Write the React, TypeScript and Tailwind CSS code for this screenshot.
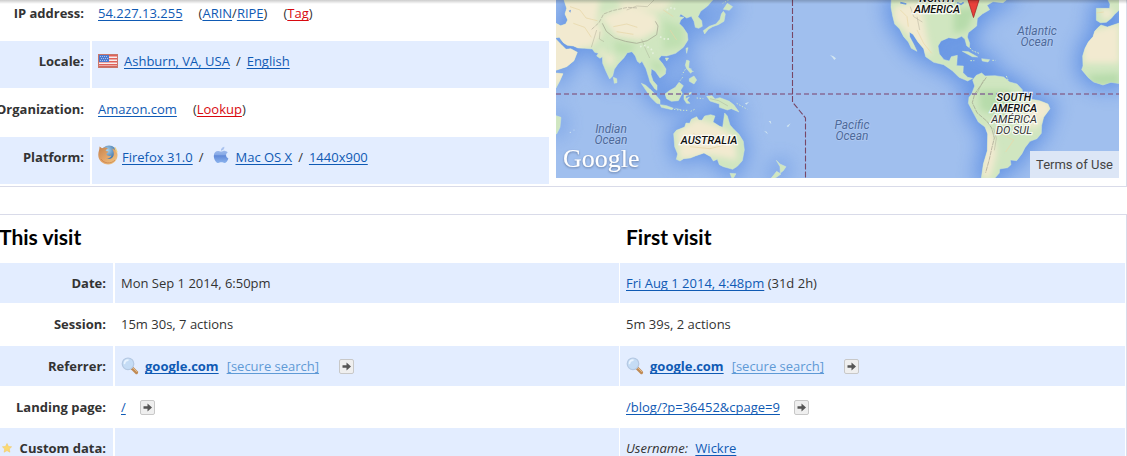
import type { ReactNode } from 'react';

const link = 'underline underline-offset-2 [text-decoration-skip-ink:none] text-[#0f5ab4]';

function A({ children, className = '' }: { children: ReactNode; className?: string }) {
  return (
    <a href="#" className={`${link} ${className}`}>
      {children}
    </a>
  );
}

function Red({ children }: { children: ReactNode }) {
  return (
    <a href="#" className="text-[#d8090f] underline underline-offset-2 [text-decoration-skip-ink:none]">
      {children}
    </a>
  );
}

function Slash() {
  return <span className="mx-[6px]">/</span>;
}

function Flag() {
  return (
    <svg viewBox="0 0 20 14" className="mr-[6px] h-[14px] w-5 shrink-0" aria-hidden="true">
      <rect width="20" height="14" fill="#c9766a" />
      <rect x="1" y="1" width="18" height="12" fill="#f7eeee" />
      {[1, 4, 7, 10].map((y) => (
        <rect key={y} x="1" y={y} width="18" height="1.5" fill="#e0625a" />
      ))}
      <rect x="1" y="12" width="18" height="1.2" fill="#d06a60" />
      <rect x="1" y="1" width="10" height="7" fill="#4b78cf" />
      <path d="M2 2.5h8M3 4.5h8M2 6.5h8" stroke="#c3d5f5" strokeWidth=".8" strokeDasharray="1 1" />
    </svg>
  );
}

function Firefox() {
  return (
    <svg viewBox="0 0 20 20" className="h-5 w-5 shrink-0" aria-hidden="true">
      <defs>
        <radialGradient id="globe" cx=".4" cy=".3">
          <stop offset="0" stopColor="#a9d3ee" />
          <stop offset="1" stopColor="#4a7db0" />
        </radialGradient>
        <linearGradient id="fox" x1="0" y1="0" x2="1" y2="1">
          <stop offset="0" stopColor="#c4824c" />
          <stop offset=".5" stopColor="#e3a468" />
          <stop offset="1" stopColor="#f0cb88" />
        </linearGradient>
      </defs>
      <circle cx="11" cy="8.5" r="8" fill="url(#globe)" />
      <path
        d="M1.5 1.5 4 3.3C6 2.2 8.500 2.300 10 3.500 8.300 4 7.600 5 7.800 6l2.600.6c-.1 1.200-1.600 1.500-2 2.400.6 1.900 3 2.500 5 1.500-.5 2-3 3.400-5 2.800 2.800 1.700 6.600.2 7.300-3.300.4-2.400-.4-4.500-1.700-6.500 3 .8 4.500 2.300 5.400 5.200.9 5.700-3.400 10.600-9 10.700C4.600 19.500.2 15.400.3 9.800.3 6.500 1.700 4.500 1.500 1.500Z"
        fill="url(#fox)"
      />
      <path d="M3 14c2.500 4.500 10 5.500 14 1" stroke="#b9683a" strokeWidth="1" fill="none" opacity=".5" />
      <path d="m17 2.500 2 5" stroke="#f2cf80" strokeWidth="1.500" />
    </svg>
  );
}

function Apple() {
  return (
    <svg viewBox="0 0 16 18" className="h-[18px] w-4 shrink-0" aria-hidden="true">
      <defs>
        <linearGradient id="apple" x1="0" y1="0" x2="0" y2="1">
          <stop offset="0" stopColor="#b4caf2" />
          <stop offset=".5" stopColor="#85a8e6" />
          <stop offset=".55" stopColor="#6189d8" />
          <stop offset="1" stopColor="#8cb4ee" />
        </linearGradient>
      </defs>
      <path
        d="M8 5.600C9 5.600 10.500 4.600 12.300 4.900c1 .1 1.900.6 2.500 1.400-2.500 1.700-2.200 4.900.6 6.100C14.600 14.700 13 17 11.500 17c-1.200 0-1.700-.7-3.100-.7S6.400 17 5.200 17C3.200 17 .8 13.300.8 9.900.8 6.700 2.800 5 4.800 5c1.400 0 2.300.6 3.200.6ZM7.900 4.700C7.800 2.700 9.500.9 11.400.8c.3 2-1.500 3.900-3.500 3.900Z"
        fill="url(#apple)"
      />
    </svg>
  );
}

function Magnifier() {
  return (
    <svg viewBox="0 0 18 18" className="h-[18px] w-[18px] shrink-0" aria-hidden="true">
      <path d="m11 11 4.500 4.500" stroke="#c08a54" strokeWidth="3.200" strokeLinecap="round" />
      <path d="m11.500 10.600 4.200 4" stroke="#e5bd8b" strokeWidth="1" strokeLinecap="round" />
      <circle cx="7" cy="6.800" r="5.800" fill="#c5dcf5" stroke="#b4c8e2" strokeWidth="1.200" />
      <path d="M3.500 6.500a3.600 3.600 0 0 1 3.500-3.400" stroke="#eaf4ff" strokeWidth="1.600" fill="none" strokeLinecap="round" />
    </svg>
  );
}

function Go() {
  return (
    <a href="#" aria-label="Open page" className="block h-[15px] w-[15px] shrink-0">
      <svg viewBox="0 0 15 15" className="block h-[15px] w-[15px]" aria-hidden="true">
        <rect x=".5" y=".5" width="14" height="14" rx="1.500" fill="#efefef" stroke="#c8c8c8" />
        <path d="M3.500 6.300h4V3.500L12 7.500 7.500 11.500V8.700h-4Z" fill="#555" />
      </svg>
    </a>
  );
}

function Star() {
  return (
    <svg viewBox="0 0 10 10" className="h-[10px] w-[10px] shrink-0" aria-hidden="true">
      <path d="m5 .5 1.400 2.900 3.200.4-2.300 2.200.6 3.200L5 7.600 2.100 9.200l.6-3.200L.4 3.800l3.200-.4Z" fill="#fbd971" stroke="#f2c75c" strokeWidth=".5" />
    </svg>
  );
}

const ASIA = `M42 0 50 25 45 42 53 60 47 72 32 77 18 70V113L28 112 40 128 52 136 70 138 84 144 104 145 127 147 134 157 145 160 140 168 150 175 157 170 158 190 168 214 179 237 188 228 193 208 204 192 222 173 232 158 246 155 256 168 262 184 270 190 276 184 288 206 296 232 300 246 314 266 321 271 321 256 309 242 303 224 304 206 316 214 330 234 346 222 348 207 337 190 326 177 334 167 350 168 377 160 400 142 414 120 412 101 399 82 388 71 392 60 402 52 388 50 392 42 410 54 424 49 432 64 436 82 446 85 457 79 455 62 444 50 452 34 473 18 488 0Z
M532 10 548 20 538 31 520 28ZM520 34 526 42 522 64 505 74 488 80 475 88 464 102 460 92 478 79 498 72 510 58 514 42Z
M18 118 34 134 48 148 62 146 82 157 72 182 50 200 18 211ZM18 219 39 221 29 244 18 264ZM18 347 33 352 30 382 20 402 18 402Z
M190 232 200 236 201 248 193 250ZM408 145 414 143 410 160ZM346 174 356 174 350 183ZM410 180 418 183 416 202 427 214 422 220 410 206 406 196ZM418 236 432 228 440 240 432 252 418 244Z
M274 250 287 256 309 276 330 300 330 312 320 310 302 292ZM330 314 350 317 370 325 366 329 334 322ZM376 325 394 330M345 282 358 272 376 262 387 247 400 257 392 271 397 280 385 302 364 304 350 296Z
M402 284 424 277 422 282 407 288 407 296 418 291 411 300 420 310 410 310 402 298ZM470 289 486 287 495 297 510 293 538 304 552 315 567 336 544 326 532 330 508 322 508 312 480 303Z
M371 401 379 391 404 381 408 369 419 370 424 358 440 350 446 360 456 361 464 348 482 344 495 348 489 366 508 378 518 382 524 339 532 348 540 375 550 386 567 403 580 424 583 450 577 482 562 499 548 508 520 500 508 494 502 478 490 483 482 470 462 459 436 468 421 474 401 476 390 483 379 478 383 462 374 440ZM540 520 558 521 551 533 545 533Z
M679 481 690 492 708 500 700 512 691 519 690 500ZM680 514 693 522 676 534 664 534Z`;

const AMERICAS = `M-107 0-108 22-103 48-97 72-82 87-70 110-56 126-47 145-30 154-40 133-52 110-53 96-42 103-27 126-10 146-4 170 20 187 50 194 76 212 96 232 122 243 137 235 122 232 108 218 109 198 89 197 91 166 73 170 67 183 51 179 37 162 33 138 42 123 65 113 88 116 104 109 114 118 119 137 127 143 128 130 121 111 124 98 149 78 151 55 166 42 188 29 180 16 198 5 228 8 238 0Z
M106 154 124 155 152 171 136 170ZM164 176 188 179 183 186 166 183Z
M137 240 148 226 164 219 174 228 204 227 230 231 248 246 270 252 286 269 286 288 309 297 338 302 363 312 369 326 350 352 344 376 343 400 330 416 309 424 294 443 285 461 269 482 250 480 252 494 242 503 218 507 217 519 204 534 163 534 169 492 181 452 182 402 174 381 154 366 143 346 124 310 126 292 134 282 143 258Z
M508 25 548 25 549 12 543 0 577 0V30L563 43 553 55 538 67 520 68 508 61ZM577 69 541 81 522 75 514 82 503 94 498 110 484 126 474 145 467 168 468 198 464 209 484 233 500 246 528 255 552 247 577 251Z`;

interface LabelProps {
  x: number;
  y: number;
  lines: string[];
  ocean?: boolean;
  light?: boolean;
}

function Label({ x, y, lines, ocean = false, light = false }: LabelProps) {
  return (
    <text
      textAnchor="middle"
      fontFamily="Roboto, sans-serif"
      fontStyle="italic"
      fontSize={ocean ? 12 : 11}
      fontWeight={ocean || light ? 400 : 500}
      fill={ocean ? '#4d6a9b' : light ? '#333' : '#111'}
      stroke={ocean ? '#b4ccf2' : '#fff'}
      strokeWidth={ocean ? 1.5 : 2.5}
      strokeOpacity=".8"
      paintOrder="stroke"
    >
      {lines.map((l, i) => (
        <tspan key={l} x={x} y={y + i * 11}>
          {l}
        </tspan>
      ))}
    </text>
  );
}

function WorldMap() {
  return (
    <div className="relative h-[178px] w-[563px] shrink-0 overflow-hidden bg-[#a0bfee]">
      <svg viewBox="0 0 563 178" preserveAspectRatio="xMidYMin slice" className="block h-full w-full" role="img" aria-label="World map">
        <defs>
          <filter id="soft" x="-20%" y="-30%" width="140%" height="160%" colorInterpolationFilters="sRGB">
            <feGaussianBlur stdDeviation="30" />
          </filter>
          <filter id="patch" x="-20%" y="-20%" width="140%" height="140%">
            <feGaussianBlur stdDeviation="9" />
          </filter>
          <clipPath id="asia">
            <path d={ASIA} />
          </clipPath>
          <clipPath id="americas">
            <path d={AMERICAS} />
          </clipPath>
          <filter id="glow">
            <feDropShadow dx="0" dy="1" stdDeviation="1" floodColor="#44587c" floodOpacity=".7" />
          </filter>
        </defs>
        <rect width="563" height="178" fill="#a0bfee" />
        <g transform="translate(-6 0) scale(.33333)">
          <path d={ASIA} fill="#5f90e3" stroke="#5f90e3" strokeWidth="22" filter="url(#soft)" opacity=".85" />
        </g>
        <g transform="translate(371 0) scale(.33333)">
          <path d={AMERICAS} fill="#5f90e3" stroke="#5f90e3" strokeWidth="36" filter="url(#soft)" opacity=".9" />
        </g>
        <g transform="translate(-6 0) scale(.33333)">
          <path d={ASIA} fill="#d0e6c0" stroke="#d3e8d2" strokeWidth="1.500" />
          <g clipPath="url(#asia)">
            <g filter="url(#patch)" fill="#f2ead0">
              <path d="M0 0H150L140 60 160 100 120 145 60 140 0 110ZM150 50 230 20 320 45 325 90 270 120 200 110ZM0 115H90V210L0 270ZM380 395 440 355 500 375 555 410 560 480 480 465 390 480Z" />
              <path d="M200 0H370L340 35 220 30ZM160 165 190 160 195 195 170 195ZM150 145 165 150 160 170 145 165Z" opacity=".8" />
            </g>
            <g filter="url(#patch)" fill="#b4daa6">
              <path d="M340 60 400 80 400 140 340 150ZM190 120 260 135 240 160 200 160ZM300 180 340 190 340 220 310 210Z" opacity=".6" />
            </g>
            <g stroke="#8b8778" fill="none" strokeWidth="2" opacity=".6">
              <path d="m157 70 12 24 25 20 32 10 34 6 32-8 28-18 4-26-8-14" strokeWidth="2.500" />
              <path d="m125 88 22-20 14-26 26-10 46-10 30 2" strokeDasharray="12 3" />
              <path d="m140 90-8 26-8 26M150 95l-2 22 14 8M230 30l30-12 32 2 20-20" strokeWidth="1.500" />
              <path d="m275 118 12 30 12 26M480 296l26 6 28 16" strokeWidth="1.300" />
            </g>
            <g stroke="#e6d6a6" fill="none" strokeWidth="3" opacity=".7">
              <path d="m60 20 30 10 18 24 34 8M70 70l34 12 20 30M190 80l40-8 32 10M200 95l50 8M340 30l30 20M360 90l20 30M430 400l30 20 38-8M420 440l60 6 40-10" />
            </g>
            <path d="m270 140 16-4 18 12 8 20M330 110l16 8 18-2M350 30l16-8 14 8" stroke="#e4f0dc" strokeWidth="5" fill="none" strokeDasharray="5 7" />
          </g>
          <path d="m56 32 7-3-2 9Z" fill="#6f9be0" />
          <g fill="none" stroke="#cfe9c8" strokeWidth="3" strokeDasharray="4 5">
            <path d="m372 328 24 3 18 0M422 334l12-6M440 294l20 2M406 208l-10 16M422 205l10 14M398 232l-8 10M560 310l14 8 18 10" />
            <path d="m536 0-18 10M470 8l-8 12M300 268l10 16" />
          </g>
          <g fill="#d3e6f0">
            <circle cx="61" cy="397" r="2" />
            <circle cx="72" cy="390" r="1.500" />
            <path d="m585 310 12-4-8 8ZM656 363l8 10-2-10ZM642 393l12 10-4-8ZM710 378l12-8-8 12ZM598 322l18 8Z" />
            <path d="m840 165 10 4 8 6-5 5-6-8Z" />
          </g>
        </g>
        <g transform="translate(371 0) scale(.33333)">
          <path d={AMERICAS} fill="#d0e6c0" stroke="#d3e8d2" strokeWidth="1.500" />
          <g clipPath="url(#americas)">
            <g filter="url(#patch)" fill="#f2ead0">
              <path d="M-100 20-30 5-10 50 0 110 15 170-20 150-60 100-100 60ZM465 100 577 70V190H470ZM310 300H370V340L320 390 290 360ZM170 380 200 400 210 460 190 534H165ZM520 20 560 30 555 55 525 60Z" />
            </g>
            <g filter="url(#patch)" fill="#a9d6a0">
              <path d="M155 270 250 270 270 320 220 350 160 330ZM80 30 150 20 120 90 80 100ZM480 225 577 220V255H500Z" opacity=".65" />
            </g>
            <g fill="none" stroke="#8b8778" strokeWidth="2.500" opacity=".6">
              <path d="m178 232-15 22-20 28-7 26 14 30 30 26 14 20 8 30-7 28-8 36-11 40" strokeDasharray="14 2" />
              <path d="m170 240-20 40M200 385l8 30-6 36M-50 20l10 30 26 16M-30 50l8 40" strokeWidth="1.500" />
            </g>
            <path d="m-80 30 20 20 4 30M-30 90l20 40 24 30M220 400l40 20-24 36M300 330l30 10M500 40l30-4M230 270l10 30" stroke="#ead9a8" strokeWidth="3" fill="none" opacity=".7" />
            <path d="m90 8 12 5 8-6M-80 8l18 4" stroke="#709ddd" strokeWidth="5" fill="none" />
          </g>
          <path d="m129 144 7 8 20 8M196 181h10M130 182h12M238 228l5 12" stroke="#cfe9c8" strokeWidth="3" strokeDasharray="5 4" fill="none" />
        </g>
        <g fill="none" stroke="#876b96" strokeWidth="1.300">
          <path d="M0 94H563" strokeDasharray="5 3" />
          <path d="M236.500 0V94V102L249.500 118V178" stroke="#784766" strokeWidth="1.100" strokeDasharray="6 2" />
        </g>
        <Label x={55} y={133} lines={['Indian', 'Ocean']} ocean />
        <Label x={296} y={129} lines={['Pacific', 'Ocean']} ocean />
        <Label x={481} y={35} lines={['Atlantic', 'Ocean']} ocean />
        <Label x={153} y={144} lines={['AUSTRALIA']} />
        <Label x={381} y={2} lines={['NORTH', 'AMERICA']} />
        <Label x={458} y={101} lines={['SOUTH', 'AMERICA']} />
        <Label x={458} y={123} lines={['AMÉRICA', 'DO SUL']} light />
        <path d="M412 0 417.500 17.500 423 0Z" fill="#e9403a" stroke="#a52a2a" strokeWidth=".8" />
        <text x="7" y="167" fontFamily="'Liberation Serif', serif" fontSize="26" fill="#fff" filter="url(#glow)">
          Google
        </text>
      </svg>
      <a
        href="#"
        className="absolute right-0 bottom-0 bg-[#dce6f6] px-[6px] pt-1 pb-[3px] font-[Roboto,sans-serif] text-[13px] leading-5 text-[#444]"
      >
        Terms of Use
      </a>
    </div>
  );
}

function InfoRow({ label, children, shaded = false, first = false }: { label: string; children: ReactNode; shaded?: boolean; first?: boolean }) {
  const bg = shaded ? 'bg-[#e3edff]' : '';
  const pad = first ? 'pt-[3px]' : 'pt-[10px]';
  return (
    <tr>
      <th scope="row" className={`w-[102px] border-b border-white pr-[6px] pb-[17px] text-right align-top font-bold whitespace-nowrap ${pad} ${bg}`}>
        {label}
      </th>
      <td className={`border-b border-l-2 border-white pb-[17px] pl-[6px] align-top ${pad} ${bg}`}>
        <div className="flex h-5 items-center whitespace-nowrap">{children}</div>
      </td>
    </tr>
  );
}

interface VisitRowProps {
  label: string;
  now?: ReactNode;
  then: ReactNode;
  shaded?: boolean;
  star?: boolean;
  tall?: boolean;
}

function VisitRow({ label, now, then, shaded = false, star = false, tall = false }: VisitRowProps) {
  const cell = `border-b border-white pt-[10px] align-top ${tall ? 'pb-[11px]' : 'pb-[10px]'} ${shaded ? 'bg-[#e3edff]' : ''}`;
  return (
    <tr>
      <th scope="row" className={`${cell} pr-[7px] font-bold whitespace-nowrap`}>
        <span className="flex h-5 items-center justify-end gap-2">
          {star && <Star />}
          {label}
        </span>
      </th>
      <td className={`${cell} border-l-2 pl-[6px]`}>
        <div className="flex h-5 items-center whitespace-nowrap">{now}</div>
      </td>
      <td className={`${cell} border-l pl-[6px]`}>
        <div className="flex h-5 items-center whitespace-nowrap">{then}</div>
      </td>
    </tr>
  );
}

function Referrer() {
  return (
    <>
      <Magnifier />
      <A className="ml-[6px] font-bold">google.com</A>
      <a href="#" className="mr-5 ml-2 text-[#5f9ad6] underline underline-offset-2 [text-decoration-skip-ink:none]">
        [secure search]
      </a>
      <Go />
    </>
  );
}

export default function App() {
  return (
    <main className="relative h-screen overflow-hidden bg-white font-['Trebuchet_MS','Open_Sans',sans-serif] text-[13px] leading-5 text-[#333]">
      <div className="-ml-3">
        <section className="flex gap-[7px] border-r border-b border-[#d9dbe9] pr-[7px] pb-px">
          <div className="min-w-0 flex-1">
            <table className="w-full border-separate border-spacing-0">
              <tbody>
                <InfoRow label="IP address:" first>
                  <A>54.227.13.255</A>
                  <span className="ml-4">
                    (<A>ARIN</A>/<A>RIPE</A>)
                  </span>
                  <span className="ml-4">
                    (<Red>Tag</Red>)
                  </span>
                </InfoRow>
                <InfoRow label="Locale:" shaded>
                  <Flag />
                  <A>Ashburn, VA, USA</A>
                  <Slash />
                  <A>English</A>
                </InfoRow>
                <InfoRow label="Organization:">
                  <A>Amazon.com</A>
                  <span className="ml-4">
                    (<Red>Lookup</Red>)
                  </span>
                </InfoRow>
                <InfoRow label="Platform:" shaded>
                  <span className="mr-1 pb-1">
                    <Firefox />
                  </span>
                  <A>Firefox 31.0</A>
                  <Slash />
                  <span className="mr-[6px] ml-1 pb-1">
                    <Apple />
                  </span>
                  <A>Mac OS X</A>
                  <Slash />
                  <A>1440x900</A>
                </InfoRow>
              </tbody>
            </table>
          </div>
          <WorldMap />
        </section>

        <section className="mt-[27px] border-t border-r border-[#d9dbe9] pr-px">
          <table className="w-full table-fixed border-separate border-spacing-0">
            <colgroup>
              <col className="w-[125px]" />
              <col />
              <col className="w-[506px]" />
            </colgroup>
            <thead>
              <tr className="text-left font-[Lato,sans-serif] text-[21px] leading-6 text-black">
                <th colSpan={2} className="pt-[10px] pb-[14px] pl-[11px] font-bold">
                  This visit
                </th>
                <th className="pt-[10px] pb-[14px] pl-[7px] font-bold">First visit</th>
              </tr>
            </thead>
            <tbody>
              <VisitRow
                label="Date:"
                shaded
                now="Mon Sep 1 2014, 6:50pm"
                then={
                  <span>
                    <A>Fri Aug 1 2014, 4:48pm</A> (31d 2h)
                  </span>
                }
              />
              <VisitRow label="Session:" tall now="15m 30s, 7 actions" then="5m 39s, 2 actions" />
              <VisitRow label="Referrer:" shaded now={<Referrer />} then={<Referrer />} />
              <VisitRow
                label="Landing page:"
                now={
                  <>
                    <A className="mr-[14px]">/</A>
                    <Go />
                  </>
                }
                then={
                  <>
                    <A className="mr-[14px]">/blog/?p=36452&amp;cpage=9</A>
                    <Go />
                  </>
                }
              />
              <VisitRow
                label="Custom data:"
                shaded
                star
                then={
                  <span>
                    <em>Username:</em> <A className="ml-1">Wickre</A>
                  </span>
                }
              />
            </tbody>
          </table>
        </section>
      </div>
      <div className="pointer-events-none absolute inset-x-0 top-0 h-1 bg-linear-to-b from-black/20 to-transparent" />
    </main>
  );
}
